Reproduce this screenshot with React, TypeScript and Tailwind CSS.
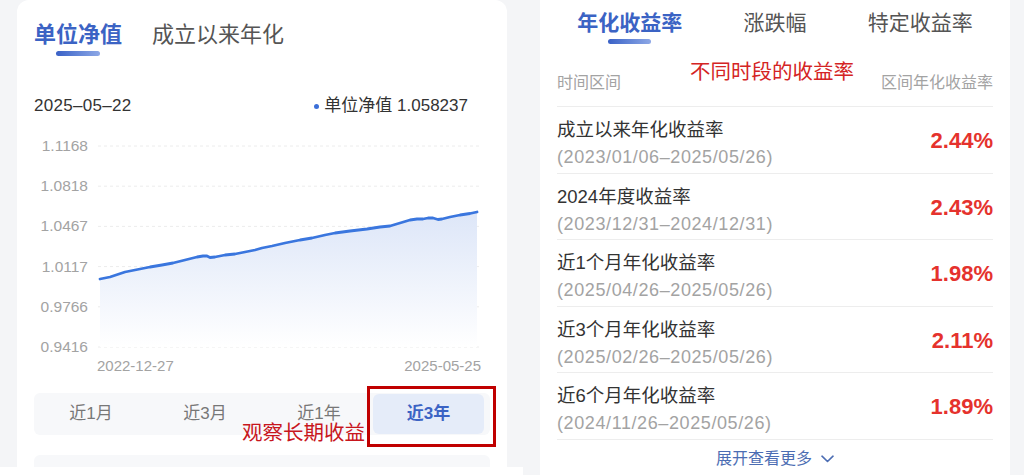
import React from "react";

const yLabels = ["1.1168", "1.0818", "1.0467", "1.0117", "0.9766", "0.9416"];

// points in page coordinates, shifted into the svg (origin at x 98, y 146)
const rawPoints: [number, number][] = [
  [100, 279], [110, 277], [125, 272], [140, 269], [150, 267], [162, 265], [173, 263],
  [185, 260], [197, 257], [203, 256], [207, 256], [210, 257.5], [215, 257], [225, 255],
  [235, 254], [245, 252], [255, 250], [262, 248], [272, 246], [285, 243], [300, 240],
  [312, 238], [325, 235], [335, 233], [350, 231], [367, 229], [380, 227], [390, 226],
  [400, 223], [410, 220], [417, 219], [423, 219], [428, 218], [433, 218], [438, 219.5],
  [442, 219], [450, 217], [460, 215], [470, 213.5], [477, 212],
];
const pts = rawPoints.map(([x, y]) => [x - 98, y - 146]);
const linePts = pts.map(([x, y]) => `${x},${y}`).join(" ");
const areaPts = `${pts[0][0]},201 ${linePts} ${pts[pts.length - 1][0]},201`;

interface Row {
  title: string;
  range: string;
  value: string;
}

const rows: Row[] = [
  { title: "成立以来年化收益率", range: "(2023/01/06–2025/05/26)", value: "2.44%" },
  { title: "2024年度收益率", range: "(2023/12/31–2024/12/31)", value: "2.43%" },
  { title: "近1个月年化收益率", range: "(2025/04/26–2025/05/26)", value: "1.98%" },
  { title: "近3个月年化收益率", range: "(2025/02/26–2025/05/26)", value: "2.11%" },
  { title: "近6个月年化收益率", range: "(2024/11/26–2025/05/26)", value: "1.89%" },
];

function NavChart() {
  return (
    <div className="mt-[20px] flex h-[221px]">
      <div className="flex w-[54px] flex-col justify-between text-right text-[15.5px] leading-[20px] text-[#a3a3a3]">
        {yLabels.map((l) => (
          <span key={l}>{l}</span>
        ))}
      </div>
      <svg width="384" height="201" className="ml-[10px] mt-[10px] overflow-visible">
        <defs>
          <linearGradient id="area" x1="0" y1="0" x2="0" y2="1">
            <stop offset="0%" stopColor="#dde6f8" />
            <stop offset="100%" stopColor="#ffffff" />
          </linearGradient>
        </defs>
        {yLabels.map((l, i) => (
          <line key={l} x1="0" x2="382" y1={i * 40.2} y2={i * 40.2} stroke="#ececec" strokeDasharray="3 3" />
        ))}
        <polygon points={areaPts} fill="url(#area)" />
        <polyline points={linePts} fill="none" stroke="#3a76de" strokeWidth="2.8" strokeLinejoin="round" strokeLinecap="round" />
      </svg>
    </div>
  );
}

function LeftCard() {
  const periods = ["近1月", "近3月", "近1年", "近3年"];
  return (
    <div className="flex w-[523px] flex-col">
      <div className="flex-1 pl-[17px] pr-[16px]">
        <div className="relative h-full w-[490px] rounded-t-[12px] bg-white px-[17px]">
          <div className="flex gap-[30px] pt-[21px] text-[22px] leading-[27px]">
            <div className="flex flex-col items-center">
              <span className="font-semibold text-[#3b63c4]">单位净值</span>
              <span className="mt-[3px] h-[5px] w-[44px] rounded-full bg-linear-to-r from-[#3a61c6] to-[#8ea8e6]" />
            </div>
            <span className="text-[#555]">成立以来年化</span>
          </div>

          <div className="mt-[40px] flex items-center justify-between pr-[22px] text-[17px] leading-[20px] text-[#333]">
            <span className="tracking-[0.3px]">2025–05–22</span>
            <span className="flex items-center">
              <span className="mr-[5px] h-[5px] w-[5px] rounded-full bg-[#3b6fd8]" />
              单位净值 1.058237
            </span>
          </div>

          <NavChart />

          <div className="flex justify-between pl-[63px] pr-[9px] text-[15px] leading-[18px] text-[#a3a3a3]">
            <span>2022-12-27</span>
            <span>2025-05-25</span>
          </div>

          <div className="mt-[18px] grid h-[42px] grid-cols-4 rounded-[6px] bg-[#f7f8fa] text-[17px]">
            {periods.map((p, i) =>
              i === 3 ? (
                <div key={p} className="my-[1px] -ml-[3px] mr-[6px] flex items-center justify-center rounded-[6px] bg-[#e5ecf9] font-semibold text-[#3b63c4]">
                  {p}
                </div>
              ) : (
                <div key={p} className="flex items-center justify-center text-[#777]">
                  {p}
                </div>
              )
            )}
          </div>

          <div className="mt-[20px] h-[12px] rounded-t-[6px] bg-[#f7f8fa]" />

          {/* annotation */}
          <span className="absolute left-[225px] top-[422px] text-[20.5px] leading-[22px] text-[#c8161d]">观察长期收益</span>
          <div className="absolute left-[350px] top-[386px] h-[61px] w-[129px] border-[3px] border-[#c00000]" />
        </div>
      </div>
      <div className="h-[8px] bg-white" />
    </div>
  );
}

function RightCard() {
  const tabs = ["年化收益率", "涨跌幅", "特定收益率"];
  return (
    <div className="pl-[17px]">
      <div className="relative h-full w-[470px] bg-white px-[17px]">
        <div className="grid grid-cols-3 pt-[10px] text-[21px] leading-[26px]">
          {tabs.map((t, i) => (
            <div key={t} className="flex flex-col items-center">
              <span className={i === 0 ? "font-semibold text-[#3b63c4]" : "text-[#555]"}>{t}</span>
              {i === 0 ? (
                <span className="mt-[3px] h-[5px] w-[43px] rounded-full bg-linear-to-r from-[#3a61c6] to-[#8ea8e6]" />
              ) : (
                <span className="mt-[3px] h-[5px]" />
              )}
            </div>
          ))}
        </div>

        <div className="flex h-[63px] items-end justify-between border-b border-[#ededed] pb-[14px] text-[16px] leading-[18px] text-[#a3a3a3]">
          <span>时间区间</span>
          <span>区间年化收益率</span>
        </div>

        {rows.map((r) => (
          <div key={r.title} className="flex h-[66.5px] justify-between border-b border-[#ededed]">
            <div className="flex flex-col pt-[12px]">
              <span className="text-[18.5px] leading-[22px] text-[#333]">{r.title}</span>
              <span className="mt-[5px] text-[18px] leading-[22px] tracking-[0.6px] text-[#a3a3a3]">{r.range}</span>
            </div>
            <span className="pt-[22px] text-[22px] font-bold leading-[24px] text-[#e5322d]">{r.value}</span>
          </div>
        ))}

        <div className="mt-[9px] flex items-center justify-center gap-[9px] text-[16px] leading-[20px] text-[#4c6db3]">
          <span>展开查看更多</span>
          <svg width="13" height="8" viewBox="0 0 13 8" fill="none">
            <path d="M1 1.2 L6.5 6.5 L12 1.2" stroke="#4c6db3" strokeWidth="1.6" strokeLinecap="round" strokeLinejoin="round" />
          </svg>
        </div>

        {/* annotation */}
        <span className="absolute left-[150px] top-[61px] text-[20.5px] leading-[22px] text-[#d42424]">不同时段的收益率</span>
      </div>
    </div>
  );
}

export default function App() {
  return (
    <div className="flex h-[475px] w-[1024px] overflow-hidden bg-[#f4f5f7] font-['Liberation_Sans','Noto_Sans_CJK_SC',sans-serif]">
      <LeftCard />
      <RightCard />
    </div>
  );
}
